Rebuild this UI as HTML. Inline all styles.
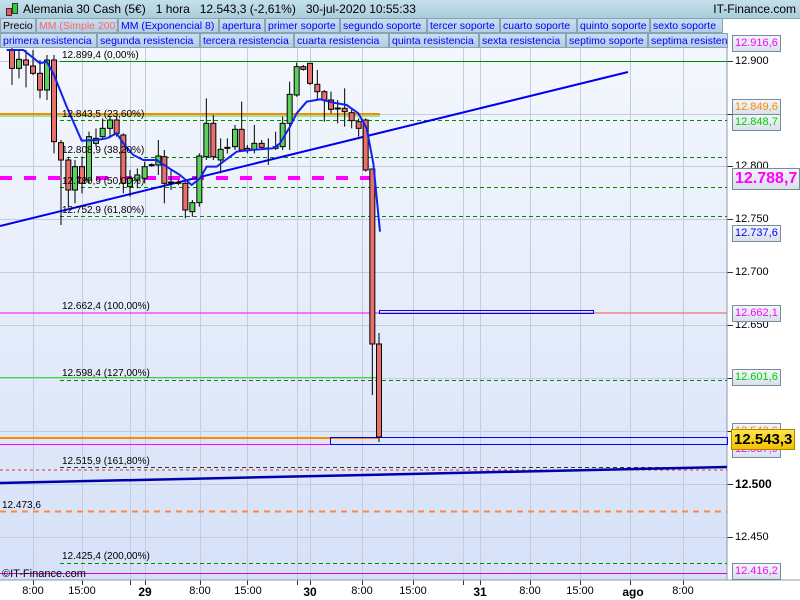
<!DOCTYPE html>
<html><head><meta charset="utf-8"><style>
body{margin:0;width:800px;height:600px;overflow:hidden;font-family:"Liberation Sans",sans-serif;position:relative;background:#fff}
#hdr{position:absolute;left:0;top:0;width:800px;height:18px;background:linear-gradient(#c5e0ea,#a9cddb);border-bottom:1px solid #8aa;font-size:12px;}
.t{position:absolute;height:15px;line-height:14px;font-size:10.5px;color:#00f;background:linear-gradient(#c9dff0,#b3cde6);border:1px solid #8aa3b3;box-sizing:border-box;padding-left:2px;white-space:nowrap;overflow:hidden}
.lb{position:absolute;font-size:10px;color:#000;white-space:nowrap}
.ax{position:absolute;font-size:11px;left:735px;}
.bx{position:absolute;left:732px;height:15px;line-height:15px;font-size:11px;border:1px solid #7a8a99;background:linear-gradient(#f3f6fa,#d7e1ec);padding:0 2px;}
.bt{position:absolute;top:585px;font-size:11px;transform:translateX(-50%)}
</style></head><body>
<svg width="800" height="600" style="position:absolute;left:0;top:0">
<defs><linearGradient id="bg" x1="0" y1="0" x2="0" y2="1"><stop offset="0" stop-color="#f4f7fd"/><stop offset="1" stop-color="#d6e1f8"/></linearGradient></defs>
<rect x="0" y="48" width="727" height="532" fill="url(#bg)"/>
<g stroke="#c4cbdc" stroke-width="1" id="grid"></g>
<line x1="727" y1="48" x2="727" y2="580" stroke="#8a9aaa"/>
<line x1="0" y1="580" x2="800" y2="580" stroke="#8a9aaa"/>
<g id="lines"></g>
<g id="cndl"></g>
<g id="ema"></g>
</svg>
<div id="hdr"><span style="position:absolute;left:4px;top:2px;width:14px;height:14px"><span style="position:absolute;left:2px;top:6px;width:4px;height:6px;background:#e55;border:1px solid #333"></span><span style="position:absolute;left:8px;top:1px;width:4px;height:9px;background:#3c3;border:1px solid #333"></span></span>
<span style="position:absolute;left:23px;top:2px">Alemania 30 Cash (5€) &nbsp;&nbsp;1 hora &nbsp;&nbsp;12.543,3 (-2,61%) &nbsp;&nbsp;30-jul-2020 10:55:33</span>
<span style="position:absolute;right:4px;top:2px">IT-Finance.com</span></div>
<div class="t" style="left:0;top:18px;width:36px;color:#000">Precio</div>
<div class="t" style="left:36px;top:18px;width:82px;color:#f66">MM (Simple 200)</div>
<div class="t" style="left:118px;top:18px;width:101px">MM (Exponencial 8)</div>
<div class="t" style="left:219px;top:18px;width:46px">apertura</div>
<div class="t" style="left:265px;top:18px;width:75px">primer soporte</div>
<div class="t" style="left:340px;top:18px;width:87px">segundo soporte</div>
<div class="t" style="left:427px;top:18px;width:73px">tercer soporte</div>
<div class="t" style="left:500px;top:18px;width:77px">cuarto soporte</div>
<div class="t" style="left:577px;top:18px;width:73px">quinto soporte</div>
<div class="t" style="left:650px;top:18px;width:73px">sexto soporte</div>
<div class="t" style="left:0;top:33px;width:97px">primera resistencia</div>
<div class="t" style="left:97px;top:33px;width:103px">segunda resistencia</div>
<div class="t" style="left:200px;top:33px;width:94px">tercera resistencia</div>
<div class="t" style="left:294px;top:33px;width:95px">cuarta resistencia</div>
<div class="t" style="left:389px;top:33px;width:90px">quinta resistencia</div>
<div class="t" style="left:479px;top:33px;width:87px">sexta resistencia</div>
<div class="t" style="left:566px;top:33px;width:82px">septimo soporte</div>
<div class="t" style="left:648px;top:33px;width:80px">septima resistencia</div>

<div class="lb" style="left:62px;top:50px">12.899,4 (0,00%)</div>
<div class="lb" style="left:62px;top:109px">12.843,5 (23,60%)</div>
<div class="lb" style="left:62px;top:145px">12.808,9 (38,20%)</div>
<div class="lb" style="left:62px;top:176px">12.780,9 (50,00%)</div>
<div class="lb" style="left:62px;top:205px">12.752,9 (61,80%)</div>
<div class="lb" style="left:62px;top:301px">12.662,4 (100,00%)</div>
<div class="lb" style="left:62px;top:368px">12.598,4 (127,00%)</div>
<div class="lb" style="left:62px;top:456px">12.515,9 (161,80%)</div>
<div class="lb" style="left:2px;top:500px">12.473,6</div>
<div class="lb" style="left:62px;top:551px">12.425,4 (200,00%)</div>
<div class="lb" style="left:2px;top:568px;font-size:11px">©IT-Finance.com</div>

<div class="ax" style="top:55px">12.900</div>
<div class="ax" style="top:160px">12.800</div>
<div class="ax" style="top:213px">12.750</div>
<div class="ax" style="top:266px">12.700</div>
<div class="ax" style="top:319px">12.650</div>
<div class="ax" style="top:531px">12.450</div>
<div class="ax" style="top:477px;font-weight:bold;font-size:12px">12.500</div>
<div class="bx" style="top:35px;color:#f0f">12.916,6</div>
<div class="bx" style="top:99px;color:#f80">12.849,6</div>
<div class="bx" style="top:114px;color:#0c0">12.848,7</div>
<div class="bx" style="top:168px;height:20px;line-height:20px;font-size:16px;font-weight:bold;color:#f0f">12.788,7</div>
<div class="bx" style="top:225px;color:#00f">12.737,6</div>
<div class="bx" style="top:305px;color:#f0f">12.662,1</div>
<div class="bx" style="top:369px;color:#0c0">12.601,6</div>
<div class="bx" style="top:423px;color:#f80">12.543,6</div>
<div class="bx" style="top:441px;color:#f0f">12.537,9</div>
<div class="bx" style="top:429px;left:731px;height:19px;line-height:19px;font-size:15px;font-weight:bold;background:linear-gradient(#ffe44a,#f2c200);border-color:#a80;color:#000">12.543,3</div>
<div class="bx" style="top:563px;color:#f0f">12.416,2</div>

<div class="bt" style="left:33px">8:00</div><div class="bt" style="left:82px">15:00</div><div class="bt" style="left:145px;font-weight:bold;font-size:12px">29</div>
<div class="bt" style="left:200px">8:00</div><div class="bt" style="left:248px">15:00</div><div class="bt" style="left:310px;font-weight:bold;font-size:12px">30</div>
<div class="bt" style="left:362px">8:00</div><div class="bt" style="left:413px">15:00</div><div class="bt" style="left:480px;font-weight:bold;font-size:12px">31</div>
<div class="bt" style="left:530px">8:00</div><div class="bt" style="left:580px">15:00</div><div class="bt" style="left:633px;font-weight:bold;font-size:12px">ago</div><div class="bt" style="left:683px">8:00</div>
<script>
var NS="http://www.w3.org/2000/svg";
function el(p,t,a){var e=document.createElementNS(NS,t);for(var k in a)e.setAttribute(k,a[k]);document.getElementById(p).appendChild(e);return e;}
[33,82,130,145,200,247,297,310,362,413,463,480,530,580,630,683].forEach(function(x){el('grid','line',{x1:x+.5,y1:48,x2:x+.5,y2:580});el('grid','line',{x1:x+.5,y1:580,x2:x+.5,y2:585,stroke:'#333'});});
[61,114,166,219,272,325,378,431,484,537].forEach(function(y){el('grid','line',{x1:0,y1:y+.5,x2:727,y2:y+.5});el('grid','line',{x1:727,y1:y+.5,x2:733,y2:y+.5,stroke:'#333'});});
function L(x1,y1,x2,y2,c,w,d){var a={x1:x1,y1:y1,x2:x2,y2:y2,stroke:c,'stroke-width':w||1};if(d)a['stroke-dasharray']=d;el('lines','line',a);}
L(60,61.5,727,61.5,'#080');
L(0,114,380,114,'#f80',2);L(0,116,380,116,'#3d3',1);
L(60,120.5,727,120.5,'#080',1,'4,3');
L(60,157.5,727,157.5,'#080',1,'4,3');
L(0,178,380,178,'#f0f',4,'12,12');
L(60,187.5,727,187.5,'#080',1,'4,3');
L(60,216.5,727,216.5,'#080',1,'4,3');
L(0,313,727,313,'#e55',1);L(0,313,380,313,'#f0f',1);
el('lines','rect',{x:379.5,y:310.5,width:214,height:3,fill:'none',stroke:'#00f'});
L(0,377.5,60,377.5,'#999');L(0,377.5,378,377.5,'#3d3');L(60,380.5,727,380.5,'#080',1,'4,3');
L(0,438,378,438,'#f80',2);L(0,444.5,330,444.5,'#f0f');
el('lines','rect',{x:330.5,y:437.5,width:397,height:7,fill:'none',stroke:'#00f'});
L(60,467.5,727,467.5,'#333',1,'4,3');L(0,470,727,470,'#d33',1,'3,3');
L(0,483,727,467,'#00a',2.5);
L(0,511.5,727,511.5,'#f84',2,'6,5');
L(60,563.5,727,563.5,'#080',1,'4,3');
L(0,573.5,727,573.5,'#d0d');
L(0,226,628,72,'#00e',2);
var c=[[36,0,55,-10,105,'r'],[57,28,55,0,85,'g'],[78,30,45,0,112,'r'],[99,48,70,0,75,'r'],[120,70,120,30,145,'r'],[141,30,120,15,150,'g'],[162,30,275,15,310,'r'],[183,278,330,270,525,'r'],[205,330,420,320,470,'r'],[225,350,420,330,460,'g'],[246,350,400,320,430,'r'],[267,260,390,245,400,'g'],[288,265,280,235,290,'g'],[308,235,260,205,265,'g'],[330,210,235,200,265,'g'],[350,210,250,200,260,'r'],[370,255,400,250,430,'r'],[390,385,410,360,440,'g'],[412,375,390,355,415,'g'],[434,350,385,335,400,'g'],[455,344,347,340,350,'g'],[475,318,345,270,375,'g'],[493,320,400,300,460,'r'],[513,396,399,360,420,'r'],[535,397,400,390,405,'r'],[556,400,480,395,505,'r'],[577,458,485,450,500,'g'],[598,318,458,310,470,'g'],[619,220,320,145,330,'g'],[640,220,320,195,330,'r'],[662,298,330,265,370,'g'],[682,292,295,265,310,'g'],[705,238,290,225,300,'g'],[725,238,300,155,305,'r'],[742,295,302,285,310,'r'],[763,280,300,225,310,'g'],[785,280,292,270,300,'r'],[805,294,297,265,345,'g'],[827,290,295,245,300,'g'],[848,220,290,200,300,'g'],[869,133,220,95,300,'g'],[890,50,135,38,140,'g'],[910,50,58,45,62,'r'],[930,40,100,40,105,'r'],[952,103,125,60,150,'r'],[973,125,150,120,215,'r'],[993,150,178,125,190,'r'],[1013,174,177,150,220,'r'],[1034,175,185,115,230,'r'],[1055,188,212,175,235,'r'],[1076,215,235,205,260,'r'],[1097,210,360,205,365,'r'],[1117,357,882,357,1035,'r'],[1137,882,1161,849,1176,'r']];
c.forEach(function(k){var x=k[0]/3,t=50+k[1]/3,b=50+k[2]/3,h=50+k[3]/3,l=50+k[4]/3;
el('cndl','line',{x1:x,y1:h,x2:x,y2:l,stroke:'#000'});
el('cndl','rect',{x:x-2.5,y:t,width:5,height:Math.max(1,b-t),fill:k[5]=='r'?'#e8706a':'#5cd05c',stroke:'#000','stroke-width':1});});
var p=[[20,0],[70,0],[120,40],[140,35],[160,70],[200,170],[245,272],[290,270],[320,265],[350,250],[370,280],[400,315],[430,330],[470,330],[500,350],[540,375],[575,405],[600,385],[620,350],[650,350],[690,320],[710,305],[750,300],[820,295],[840,280],[870,230],[890,190],[920,155],[960,148],[1000,158],[1040,165],[1075,190],[1100,235],[1120,340],[1140,545]];
el('ema','polyline',{points:p.map(function(q){return (q[0]/3)+','+(50+q[1]/3)}).join(' '),fill:'none',stroke:'#12e','stroke-width':2});
</script>
</body></html>
